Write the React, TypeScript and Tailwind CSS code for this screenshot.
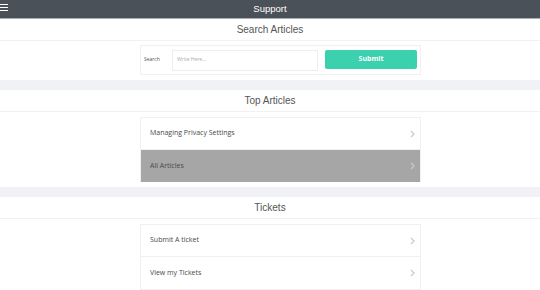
import React from 'react';

const sans = "font-['Liberation_Sans',Arial,sans-serif]";
const body = "font-['Open_Sans','Liberation_Sans',sans-serif]";

function Chevron() {
  return (
    <svg width="5" height="8" viewBox="0 0 5 8" className="mr-[5px]">
      <path d="M1 1l3 3-3 3" fill="none" stroke="#c9c9cf" strokeWidth="1.2" />
    </svg>
  );
}

function ListItem({ label, active }: { label: string; active?: boolean }) {
  return (
    <div
      className={`h-8 flex items-center justify-between pl-[9px] border-b border-[#f0f0f0] last:border-b-0 ${
        active ? 'bg-[#a6a6a6]' : 'bg-white'
      }`}
    >
      <span className={`${body} text-[7px] text-[#4a4a4a]`}>{label}</span>
      <Chevron />
    </div>
  );
}

function Heading({ title }: { title: string }) {
  return (
    <div className={`h-[22px] flex items-center justify-center border-b border-[#f2f2f4] ${sans} text-[10px] text-[#555]`}>
      {title}
    </div>
  );
}

export default function App() {
  return (
    <div className="w-[540px] h-[290px] bg-white overflow-hidden">
      {/* Top bar */}
      <header className="h-[19px] bg-[#4b5158] border-b border-[#a9aeb4] flex items-center relative">
        <div className="absolute left-0 top-[4px] flex flex-col gap-[2px]">
          <span className="block w-[8px] h-[1px] bg-white" />
          <span className="block w-[8px] h-[1px] bg-white" />
          <span className="block w-[8px] h-[1px] bg-white" />
        </div>
        <span className={`mx-auto ${sans} text-[9.5px] text-white`}>Support</span>
      </header>

      {/* Search */}
      <section>
        <Heading title="Search Articles" />
        <div className="pt-[4px] pb-[5px]">
          <div className="ml-[140px] w-[281px] h-[30px] border border-[#f0f0f2] flex items-center">
            <span className={`${body} text-[5px] text-[#555] ml-[3px] w-[28px]`}>Search</span>
            <div className="w-[146px] h-[21px] border border-[#eeeef0] flex items-center pl-[4px]">
              <span className={`${body} text-[5px] text-[#aaa]`}>Write Here...</span>
            </div>
            <button className={`ml-[7px] w-[92px] h-[19px] mb-[2px] rounded-[2px] bg-[#3bd0ae] text-white ${body} font-bold text-[7px]`}>
              Submit
            </button>
          </div>
        </div>
      </section>

      <div className="h-[10px] bg-[#f1f2f6]" />

      {/* Top articles */}
      <section>
        <Heading title="Top Articles" />
        <div className="pt-[5px] pb-[5px]">
          <div className="ml-[140px] w-[281px] border border-[#f0f0f2] border-b-0">
            <ListItem label="Managing Privacy Settings" />
            <ListItem label="All Articles" active />
          </div>
        </div>
      </section>

      <div className="h-[10px] bg-[#f1f2f6]" />

      {/* Tickets */}
      <section>
        <Heading title="Tickets" />
        <div className="pt-[5px]">
          <div className="ml-[140px] w-[281px] border border-[#f0f0f2]">
            <ListItem label="Submit A ticket" />
            <ListItem label="View my Tickets" />
          </div>
        </div>
      </section>
    </div>
  );
}
